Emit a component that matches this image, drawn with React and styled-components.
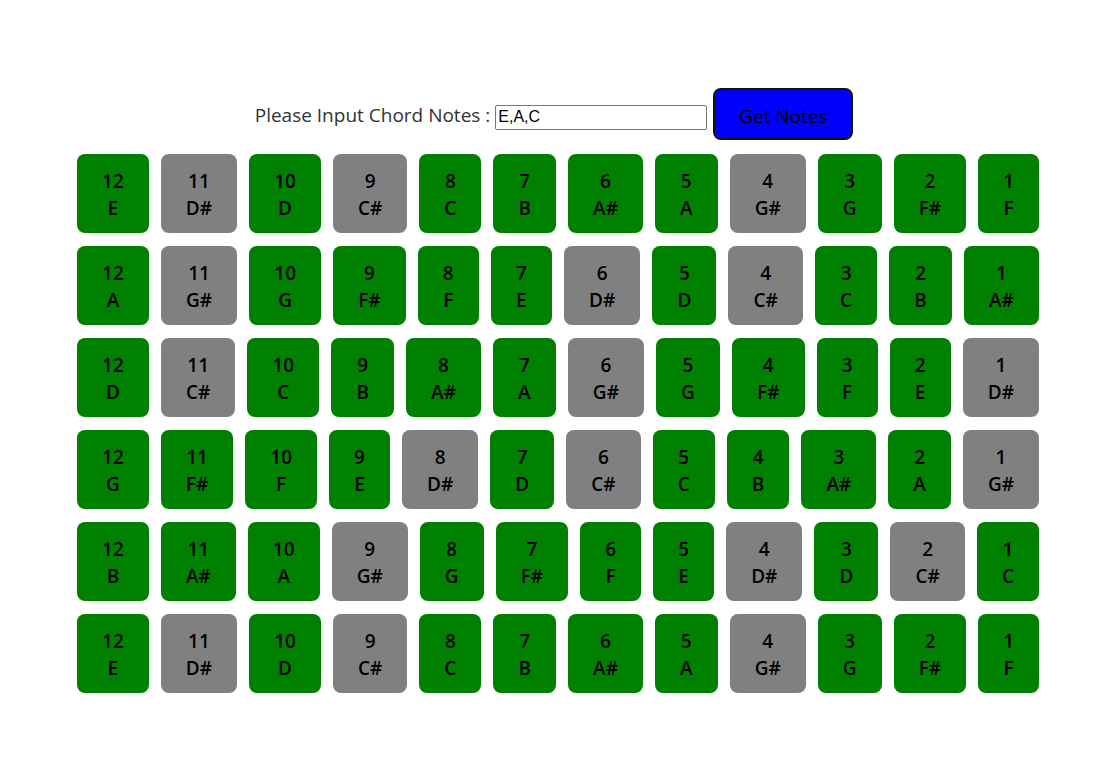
import React, { useState } from 'react';
import styled, { createGlobalStyle } from 'styled-components';

const GlobalStyle = createGlobalStyle`
    body {
        margin: 0;
        background: #ffffff;
        font-family: "Open Sans", "Noto Sans", sans-serif;
    }
`;

const NOTES = ['C', 'C#', 'D', 'D#', 'E', 'F', 'F#', 'G', 'G#', 'A', 'A#', 'B'];
const STRINGS = ['E', 'A', 'D', 'G', 'B', 'E'];
const MUTED = ['C#', 'D#', 'G#'];

const Page = styled.div`
    display: flex;
    flex-direction: column;
    align-items: center;
    padding-top: 88px;
`;

const Toolbar = styled.div`
    display: flex;
    align-items: center;
    gap: 5px;
    margin-bottom: 14px;
    margin-right: 8px;
`;

const Label = styled.label`
    font-size: 19px;
    color: #333333;
    margin-top: 2px;
`;

const Input = styled.input`
    width: 206px;
    height: 21px;
    margin-top: 6px;
    margin-right: 1px;
    padding: 1px 2px;
    border: 1px solid #767676;
    border-radius: 2px;
    font-family: "Liberation Sans", Arial, sans-serif;
    font-size: 16px;
    color: #000000;
    outline: none;
`;

const Button = styled.button`
    width: 140px;
    height: 52px;
    padding: 4px 0 0;
    background: #0000ff;
    border: 2px solid #111111;
    border-radius: 8px;
    font-family: "Open Sans", "Noto Sans", sans-serif;
    font-size: 19px;
    font-weight: 500;
    color: #000000;
    cursor: pointer;
`;

const Board = styled.div`
    display: flex;
    flex-direction: column;
    gap: 13px;
    width: 962px;
`;

const Row = styled.div`
    display: flex;
    gap: 12px;
`;

const Cell = styled.div`
    flex: 1 1 auto;
    display: flex;
    flex-direction: column;
    align-items: center;
    justify-content: center;
    height: 79px;
    padding: 2px 13px 0;
    box-sizing: border-box;
    border-radius: 8px;
    background: ${(p) => (p.$muted ? '#808080' : '#008000')};
    color: #000000;
    font-size: 19px;
    font-weight: 600;
    line-height: 27px;
`;

const fretsFor = (open) => {
    const start = NOTES.indexOf(open);
    const list = [];
    for (let fret = 12; fret >= 1; fret--) {
        list.push({ fret, note: NOTES[(start + fret) % 12] });
    }
    return list;
};

export default function App() {
    const [chord, setChord] = useState('E,A,C');

    return (
        <Page>
            <GlobalStyle />
            <Toolbar>
                <Label>Please Input Chord Notes :</Label>
                <Input value={chord} onChange={(e) => setChord(e.target.value)} />
                <Button>Get Notes</Button>
            </Toolbar>
            <Board>
                {STRINGS.map((open, i) => (
                    <Row key={i}>
                        {fretsFor(open).map(({ fret, note }) => (
                            <Cell key={fret} $muted={MUTED.includes(note)}>
                                <span>{fret}</span>
                                <span>{note}</span>
                            </Cell>
                        ))}
                    </Row>
                ))}
            </Board>
        </Page>
    );
}
